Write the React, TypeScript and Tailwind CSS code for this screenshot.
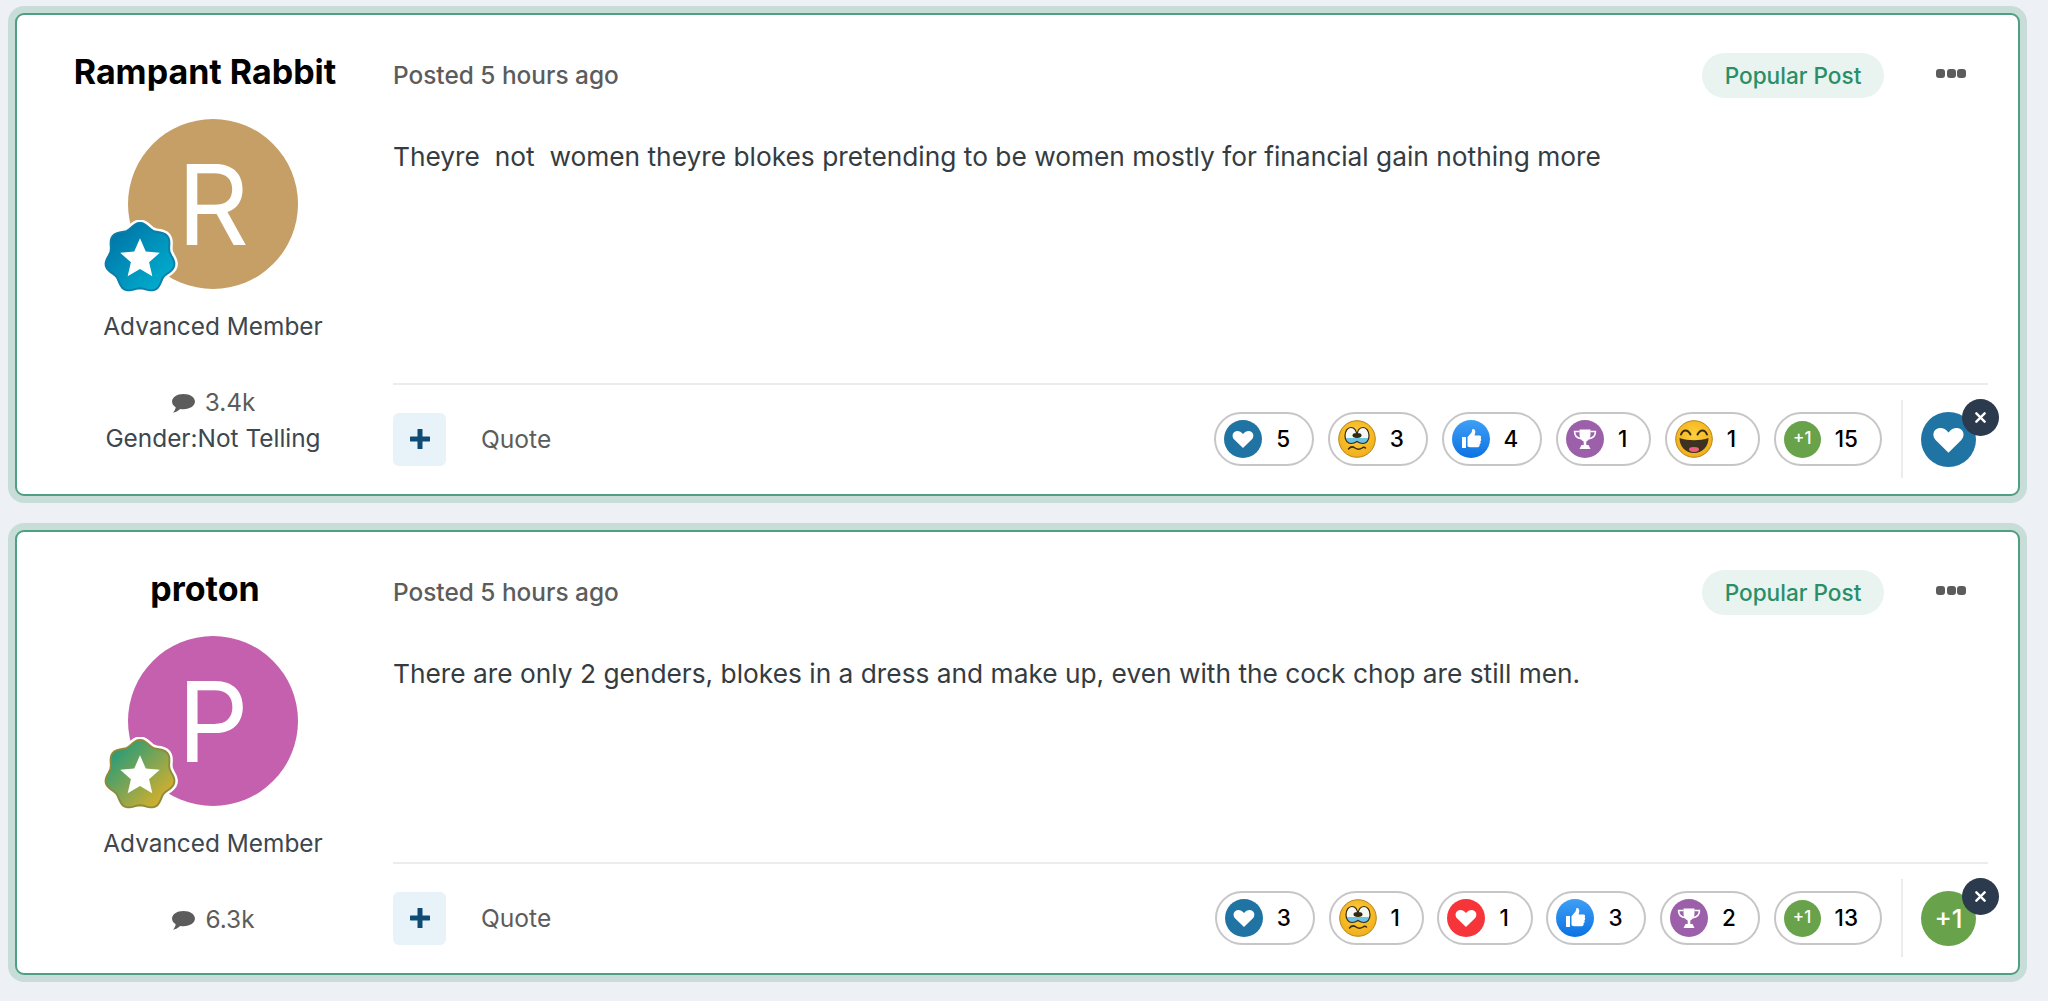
import { useId, type ReactNode } from 'react';

const font = "font-['Inter','Noto_Sans',sans-serif]";

function lobePath(r: number, depth: number) {
  const pts: string[] = [];
  for (let i = 0; i < 84; i++) {
    const t = (i / 84) * Math.PI * 2;
    const rad = r * (1 + depth * Math.cos(7 * t));
    const x = 50 + rad * Math.sin(t);
    const y = 50 - rad * Math.cos(t);
    pts.push(`${x.toFixed(1)} ${y.toFixed(1)}`);
  }
  return `M${pts.join('L')}Z`;
}

const STAR = 'M50 24 L57.6 41.5 L76 43.2 L62 55.6 L66.2 74 L50 64.4 L33.8 74 L38 55.6 L24 43.2 L42.4 41.5 Z';

function Badge({ from, to, edge }: { from: string; to: string; edge: string }) {
  const id = useId();
  return (
    <svg viewBox="0 0 100 100" className="absolute left-[-26px] top-[101px] h-[76px] w-[76px]">
      <defs>
        <linearGradient id={id} x1="0.1" y1="0.1" x2="0.9" y2="0.9">
          <stop offset="0" stopColor={from} />
          <stop offset="1" stopColor={to} />
        </linearGradient>
      </defs>
      <path d={lobePath(43, 0.075)} fill="#fff" stroke="#fff" strokeWidth="9" />
      <path d={lobePath(43, 0.075)} fill={`url(#${id})`} stroke={edge} strokeWidth="2.5" />
      <path d={STAR} fill="#fff" />
    </svg>
  );
}

const HEART = 'M12 20.5 L3.6 12.3 C1.4 10 1.5 6.6 3.8 5 C6.2 3.4 9.6 4 12 7 C14.4 4 17.8 3.4 20.2 5 C22.5 6.6 22.6 10 20.4 12.3 Z';

function HeartIcon({ bg, size }: { bg: string; size: string }) {
  return (
    <svg viewBox="0 0 38 38" className={size}>
      <circle cx="19" cy="19" r="19" fill={bg} />
      <g transform="translate(6.5 6.8) scale(1.04)">
        <path d={HEART} fill="#fff" />
      </g>
    </svg>
  );
}

function ThumbIcon() {
  const id = useId();
  return (
    <svg viewBox="0 0 38 38" className="h-[38px] w-[38px]">
      <defs>
        <linearGradient id={id} x1="0.5" y1="0" x2="0.5" y2="1">
          <stop offset="0" stopColor="#3f9ff5" />
          <stop offset="1" stopColor="#0b72e3" />
        </linearGradient>
      </defs>
      <circle cx="19" cy="19" r="19" fill={`url(#${id})`} />
      <path
        d="M10 17 H14 V28 H10 Z M15.5 17.2 L19.5 12.5 C20 11.5 20 10 20.6 9 C22.2 8.5 23.5 10 23.3 12 L22.6 15.5 H27.5 C29 15.5 29.6 17.4 28.6 18.3 C29.6 19.2 29.4 20.8 28.3 21.3 C29 22.3 28.7 23.7 27.6 24.2 C28 25.4 27.2 27.3 25.7 27.3 H19 C17.5 27.3 16.5 26.9 15.5 26.2 Z"
        fill="#fff"
      />
    </svg>
  );
}

function TrophyIcon() {
  return (
    <svg viewBox="0 0 38 38" className="h-[38px] w-[38px]">
      <circle cx="19" cy="19" r="19" fill="#9b60a9" />
      <path d="M13.5 9.5 H24.5 V14 C24.5 18.5 22.5 20.5 20.3 21.5 V25 H22.5 L24.5 29 H13.5 L15.5 25 H17.7 V21.5 C15.5 20.5 13.5 18.5 13.5 14 Z" fill="#fff" />
      <path d="M13.5 11.5 H8.6 C8.4 15.2 10.5 17.8 15 18.8 M24.5 11.5 H29.4 C29.6 15.2 27.5 17.8 23 18.8" fill="none" stroke="#fff" strokeWidth="1.6" />
    </svg>
  );
}

function CryIcon() {
  const id = useId();
  const clip = useId();
  return (
    <svg viewBox="0 0 38 38" className="h-[38px] w-[38px]">
      <defs>
        <radialGradient id={id} cx="0.5" cy="0.4" r="0.6">
          <stop offset="0" stopColor="#fdd03a" />
          <stop offset="1" stopColor="#f2ae1c" />
        </radialGradient>
        <clipPath id={clip}>
          <path d="M19 17 C19 10 16 7.5 13 7.5 C9.5 7.5 7 11 7 16 C7 21 10 23.5 13 23.5 C15 23.5 17.5 22.5 19 21.5 C20.5 22.5 23 23.5 25 23.5 C28 23.5 31 21 31 16 C31 11 28.5 7.5 25 7.5 C22 7.5 19 10 19 17 Z" />
        </clipPath>
      </defs>
      <circle cx="19" cy="19" r="18.3" fill={`url(#${id})`} stroke="#b98519" strokeWidth="1" />
      <g clipPath={`url(#${clip})`}>
        <rect x="5" y="6" width="28" height="19" fill="#f6f8f4" />
        <rect x="5" y="18" width="28" height="7" fill="#6cc3e2" />
        <ellipse cx="19" cy="15.5" rx="4.5" ry="2.4" fill="#33260f" />
      </g>
      <path d="M19 17 C19 10 16 7.5 13 7.5 C9.5 7.5 7 11 7 16 C7 21 10 23.5 13 23.5 C15 23.5 17.5 22.5 19 21.5 C20.5 22.5 23 23.5 25 23.5 C28 23.5 31 21 31 16 C31 11 28.5 7.5 25 7.5 C22 7.5 19 10 19 17 Z" fill="none" stroke="#33260f" strokeWidth="1.2" />
      <path d="M10.5 29 C12.5 26.5 15 26.5 17 28 C19 29.5 22 29.5 24 28 C25 27.2 26.5 27.2 27.5 28" stroke="#3d2c10" strokeWidth="1.5" fill="none" strokeLinecap="round" />
    </svg>
  );
}

function LaughIcon() {
  const id = useId();
  return (
    <svg viewBox="0 0 38 38" className="h-[38px] w-[38px]">
      <defs>
        <radialGradient id={id} cx="0.5" cy="0.4" r="0.6">
          <stop offset="0" stopColor="#fdd03a" />
          <stop offset="1" stopColor="#f2ae1c" />
        </radialGradient>
      </defs>
      <circle cx="19" cy="19" r="18.3" fill={`url(#${id})`} stroke="#b98519" strokeWidth="1" />
      <path d="M6 14.5 C8 9 13 9 15.5 14.5 M22.5 14.5 C25 9 30 9 32 14.5" stroke="#3a2c14" strokeWidth="2" fill="none" strokeLinecap="round" />
      <path d="M4.5 18 C13 21 25 21 33.5 18 C33.5 26 28 33 19 33 C10 33 4.5 26 4.5 18 Z" fill="#3d3120" />
      <ellipse cx="19" cy="29.5" rx="5" ry="2.4" fill="#e9617c" />
    </svg>
  );
}

function PlusOne({ big }: { big?: boolean }) {
  return (
    <span
      className={
        big
          ? 'flex h-[55px] w-[55px] items-center justify-center rounded-full bg-[#68a34b] text-[26px] font-medium text-white'
          : 'flex h-[37px] w-[37px] items-center justify-center rounded-full bg-[#68a34b] text-[17px] font-medium text-white'
      }
    >
      +1
    </span>
  );
}

const icons: Record<string, ReactNode> = {
  like: <HeartIcon bg="#1f74a3" size="h-[38px] w-[38px]" />,
  cry: <CryIcon />,
  love: <HeartIcon bg="#f6353b" size="h-[38px] w-[38px]" />,
  thumb: <ThumbIcon />,
  trophy: <TrophyIcon />,
  laugh: <LaughIcon />,
  plus: <PlusOne />,
};

function Pill({ kind, n }: { kind: string; n: number }) {
  return (
    <span className="flex h-[54px] items-center rounded-full border-2 border-[#c6c6c6] pl-[8px] pr-[22px]">
      {icons[kind]}
      <span className="ml-[14px] text-[22.5px] font-medium leading-none text-black">{n}</span>
    </span>
  );
}

type PostData = {
  name: string;
  letter: string;
  avatar: string;
  badge: { from: string; to: string; edge: string };
  posts: string;
  gender?: string;
  body: string;
  reactions: [string, number][];
  mine: ReactNode;
};

function Post({ p }: { p: PostData }) {
  return (
    <article className="flex rounded-[9px] border-2 border-[#4f9f82] bg-white pl-[51px] ring-[7px] ring-[#c8ddd7]">
      <aside className={`flex w-[290px] shrink-0 flex-col items-center pt-[39px] ${p.gender ? 'pb-[38px]' : 'pb-[36px]'}`}>
        <h3 className="mr-[16px] whitespace-nowrap text-[34px] font-bold leading-[36px] text-black">{p.name}</h3>
        <div
          className={`relative mt-[29px] flex h-[170px] w-[170px] items-center justify-center rounded-full text-[112px] font-normal leading-none text-white ${p.avatar}`}
        >
          {p.letter}
          <Badge {...p.badge} />
        </div>
        <p className="mt-[21px] text-[24.4px] leading-[32px] text-[#3d474d]">Advanced Member</p>
        <p className="mt-[42px] flex items-center gap-[9px] text-[24.4px] leading-[36px] text-[#5c5c5c]">
          <svg viewBox="0 0 26 22" className="mt-[3px] h-[21px] w-[25px]">
            <path d="M13 1 C20 1 25 4.5 25 9 C25 13.5 20 17 13 17 C11.8 17 10.6 16.9 9.6 16.7 C7.5 18.7 4.5 20.4 2 20.6 C3.6 19 4.6 17 4.8 15 C2.4 13.6 1 11.4 1 9 C1 4.5 6 1 13 1 Z" fill="#5c5c5c" />
          </svg>
          {p.posts}
        </p>
        {p.gender && <p className="text-[24.4px] leading-[36px] text-[#3d474d]">Gender:{p.gender}</p>}
      </aside>

      <div className="ml-[35px] flex min-w-0 flex-1 flex-col pr-[30px] pt-[38px]">
        <header className="flex h-[45px] items-center">
          <span className="text-[24.4px] font-medium text-[#5c5c5c]">Posted 5 hours ago</span>
          <span className="ml-auto flex h-[45px] w-[182px] items-center justify-center rounded-full bg-[#e9f3ef] text-[22.6px] font-medium text-[#2a8f69]">
            Popular Post
          </span>
          <span className="mb-[4px] ml-[52px] mr-[22px] flex gap-[1.5px]">
            <i className="h-[9px] w-[9px] rounded-[3px] bg-[#5c5c5c]" />
            <i className="h-[9px] w-[9px] rounded-[3px] bg-[#5c5c5c]" />
            <i className="h-[9px] w-[9px] rounded-[3px] bg-[#5c5c5c]" />
          </span>
        </header>
        <p className="mt-[41px] whitespace-pre-wrap text-[26.3px] leading-[36px] text-[#353c41]">{p.body}</p>

        <footer className="mt-auto flex items-center border-t-2 border-[#ececec] pb-[16px] pt-[15px]">
          <button className="flex h-[53px] w-[53px] items-center justify-center rounded-[6px] bg-[#e8f2f9]">
            <svg viewBox="0 0 20 20" className="h-[20px] w-[20px]">
              <path d="M10 1 V19 M1 10 H19" stroke="#0f4c75" strokeWidth="5" strokeLinecap="round" />
            </svg>
          </button>
          <span className="ml-[35px] text-[24.6px] text-[#5c5c5c]">Quote</span>
          <div className="ml-auto flex gap-[13.6px]">
            {p.reactions.map(([k, n]) => (
              <Pill key={k} kind={k} n={n} />
            ))}
          </div>
          <div className="ml-[19px] h-[78px] w-[2px] bg-[#ececec]" />
          <div className="relative ml-[18px] mr-[12px]">
            {p.mine}
            <span className="absolute left-[41px] top-[-13px] flex h-[37px] w-[37px] items-center justify-center rounded-full bg-[#2c3a4d]">
              <svg viewBox="0 0 12 12" className="h-[11px] w-[11px]">
                <path d="M1.5 1.5 L10.5 10.5 M10.5 1.5 L1.5 10.5" stroke="#fff" strokeWidth="2.6" strokeLinecap="round" />
              </svg>
            </span>
          </div>
        </footer>
      </div>
    </article>
  );
}

const POSTS: PostData[] = [
  {
    name: 'Rampant Rabbit',
    letter: 'R',
    avatar: 'bg-[#c59f66]',
    badge: { from: '#0074a6', to: '#00aecf', edge: '#0a7ea8' },
    posts: '3.4k',
    gender: 'Not Telling',
    body: 'Theyre  not  women theyre blokes pretending to be women mostly for financial gain nothing more',
    reactions: [['like', 5], ['cry', 3], ['thumb', 4], ['trophy', 1], ['laugh', 1], ['plus', 15]],
    mine: <HeartIcon bg="#1f74a3" size="h-[55px] w-[55px]" />,
  },
  {
    name: 'proton',
    letter: 'P',
    avatar: 'bg-[#c460ae]',
    badge: { from: '#1f9a7d', to: '#dcb02a', edge: '#8f8a3a' },
    posts: '6.3k',
    body: 'There are only 2 genders, blokes in a dress and make up, even with the cock chop are still men.',
    reactions: [['like', 3], ['cry', 1], ['love', 1], ['thumb', 3], ['trophy', 2], ['plus', 13]],
    mine: <PlusOne big />,
  },
];

export default function App() {
  return (
    <main className={`flex h-screen flex-col gap-[34px] overflow-hidden bg-[#edf0f5] pb-[27px] pl-[15px] pr-[28px] pt-[13px] ${font}`}>
      {POSTS.map((p) => (
        <Post key={p.name} p={p} />
      ))}
    </main>
  );
}
